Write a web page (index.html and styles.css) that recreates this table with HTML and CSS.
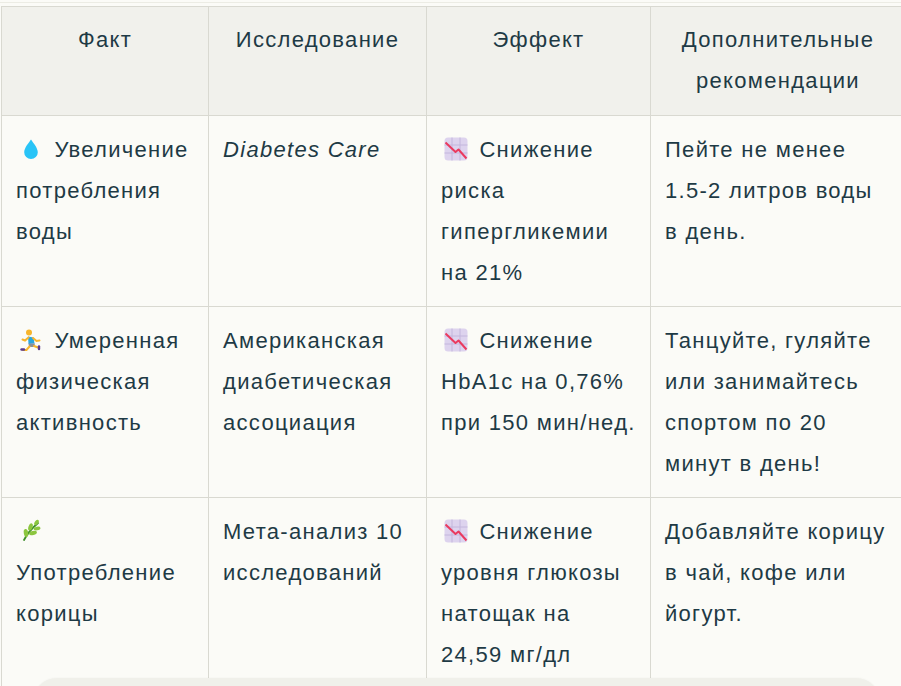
FILE: index.html
```html
<!DOCTYPE html>
<html lang="ru">
<head>
<meta charset="utf-8">
<title>Таблица</title>
<link rel="stylesheet" href="styles.css">
</head>
<body>
<div class="topline"></div>
<div class="wrap">
<table class="facts">
  <colgroup>
    <col class="c1"><col class="c2"><col class="c3"><col class="c4">
  </colgroup>
  <thead>
    <tr>
      <th>Факт</th>
      <th>Исследование</th>
      <th>Эффект</th>
      <th>Дополнительные рекомендации</th>
    </tr>
  </thead>
  <tbody>
    <tr>
      <td><svg class="emo" viewBox="0 0 24 24"><path d="M12 2.5C10.5 5 5.2 10.6 5.2 15.2a6.8 6.8 0 0 0 13.6 0C18.8 10.6 13.5 5 12 2.5z" fill="#29c4f7"/></svg> Увеличение потребления воды</td>
      <td><em>Diabetes Care</em></td>
      <td><svg class="emo" viewBox="0 0 24 24"><rect x="0.5" y="0.5" width="23" height="23" rx="3.5" fill="#ddd3ee"/><g stroke="#c3b6dc" stroke-width="1"><line x1="8" y1="0.5" x2="8" y2="23.5"/><line x1="16" y1="0.5" x2="16" y2="23.5"/><line x1="0.5" y1="8" x2="23.5" y2="8"/><line x1="0.5" y1="16" x2="23.5" y2="16"/></g><polyline points="1.5,5.5 11.5,15 14.5,12.5 22.5,21.5" fill="none" stroke="#ea3a5f" stroke-width="2" stroke-linejoin="round"/></svg> Снижение риска гипергликемии на 21%</td>
      <td>Пейте не менее 1.5-2 литров воды в день.</td>
    </tr>
    <tr>
      <td><svg class="emo" viewBox="0 0 24 24"><circle cx="10" cy="4.5" r="3" fill="#f7b52c"/><path d="M9 8.5l5.5 1 1 6-6 .5z" fill="#2aa6df"/><path d="M9.5 9.5L6 12.5 3.5 11.5" fill="none" stroke="#f7b52c" stroke-width="2" stroke-linecap="round"/><path d="M14 10l3.5 3 3-.5" fill="none" stroke="#f7b52c" stroke-width="2" stroke-linecap="round"/><path d="M9.5 15.5h6.5l-1 3.5h-5z" fill="#8a8f99"/><path d="M10.5 18.5l-3 3.5-3.5 0" fill="none" stroke="#f7b52c" stroke-width="2" stroke-linecap="round"/><path d="M15 18l4 1.5" fill="none" stroke="#f7b52c" stroke-width="2" stroke-linecap="round"/><path d="M2.5 21.5h2.5" stroke="#5b3b8c" stroke-width="2.4" stroke-linecap="round"/><path d="M20 18.5v2.5" stroke="#5b3b8c" stroke-width="2.4" stroke-linecap="round"/></svg> Умеренная физическая активность</td>
      <td>Американская диабетическая ассоциация</td>
      <td><svg class="emo" viewBox="0 0 24 24"><rect x="0.5" y="0.5" width="23" height="23" rx="3.5" fill="#ddd3ee"/><g stroke="#c3b6dc" stroke-width="1"><line x1="8" y1="0.5" x2="8" y2="23.5"/><line x1="16" y1="0.5" x2="16" y2="23.5"/><line x1="0.5" y1="8" x2="23.5" y2="8"/><line x1="0.5" y1="16" x2="23.5" y2="16"/></g><polyline points="1.5,5.5 11.5,15 14.5,12.5 22.5,21.5" fill="none" stroke="#ea3a5f" stroke-width="2" stroke-linejoin="round"/></svg> Снижение HbA1c на 0,76% при 150 мин/нед.</td>
      <td>Танцуйте, гуляйте или занимайтесь спортом по 20 минут в день!</td>
    </tr>
    <tr>
      <td><svg class="emo" viewBox="0 0 24 24"><path d="M5 21C8 15 12 10 19 4" fill="none" stroke="#3d8f2a" stroke-width="1.8" stroke-linecap="round"/><ellipse cx="7" cy="14" rx="2.2" ry="4" transform="rotate(-10 7 14)" fill="#8cc63f"/><ellipse cx="11.5" cy="8" rx="2" ry="3.8" transform="rotate(20 11.5 8)" fill="#8cc63f"/><ellipse cx="17.5" cy="3.5" rx="1.8" ry="3" transform="rotate(35 17.5 3.5)" fill="#8cc63f"/><ellipse cx="14" cy="14" rx="4" ry="2" transform="rotate(-15 14 14)" fill="#8cc63f"/><ellipse cx="18" cy="9.5" rx="3.5" ry="1.8" transform="rotate(-10 18 9.5)" fill="#8cc63f"/></svg> Употребление корицы</td>
      <td>Мета-анализ 10 исследований</td>
      <td><svg class="emo" viewBox="0 0 24 24"><rect x="0.5" y="0.5" width="23" height="23" rx="3.5" fill="#ddd3ee"/><g stroke="#c3b6dc" stroke-width="1"><line x1="8" y1="0.5" x2="8" y2="23.5"/><line x1="16" y1="0.5" x2="16" y2="23.5"/><line x1="0.5" y1="8" x2="23.5" y2="8"/><line x1="0.5" y1="16" x2="23.5" y2="16"/></g><polyline points="1.5,5.5 11.5,15 14.5,12.5 22.5,21.5" fill="none" stroke="#ea3a5f" stroke-width="2" stroke-linejoin="round"/></svg> Снижение уровня глюкозы натощак на 24,59 мг/дл</td>
      <td>Добавляйте корицу в чай, кофе или йогурт.</td>
    </tr>
  </tbody>
</table>
</div>
<div class="composer"></div>
</body>
</html>
```
FILE: styles.css
```css
html, body {
  margin: 0;
  padding: 0;
  background: #fbfbf7;
  overflow: hidden;
}
body {
  font-family: "Liberation Sans", Arial, sans-serif;
  color: #1e3a45;
}
.topline {
  height: 1px;
  margin-top: 2px;
  background: #ecece4;
}
.wrap {
  padding: 3px 0 0 1px;
}
.facts {
  border-collapse: collapse;
  width: 904px;
  table-layout: fixed;
  font-size: 22px;
  line-height: 41px;
  letter-spacing: 1.3px;
}
.c1 { width: 207px; }
.c2 { width: 218px; }
.c3 { width: 224px; }
.c4 { width: 255px; }
.facts th,
.facts td {
  border: 1px solid #d9d9d1;
  vertical-align: top;
  text-align: left;
}
.facts th {
  padding: 12px 14px 14px 14px;
  background: #f1f1ec;
  font-weight: normal;
  text-align: center;
}
.facts td {
  padding: 13px 14px 13px 14px;
  background: #fbfbf7;
}
.emo {
  width: 24px;
  height: 24px;
  vertical-align: -4px;
  margin-left: 3px;
  margin-right: 4px;
}
.composer {
  position: fixed;
  left: 33px;
  right: 21px;
  top: 678px;
  height: 80px;
  border-radius: 24px;
  background: #f0f0ea;
  box-shadow: 0 0 2px rgba(0,0,0,0.06);
}
```
